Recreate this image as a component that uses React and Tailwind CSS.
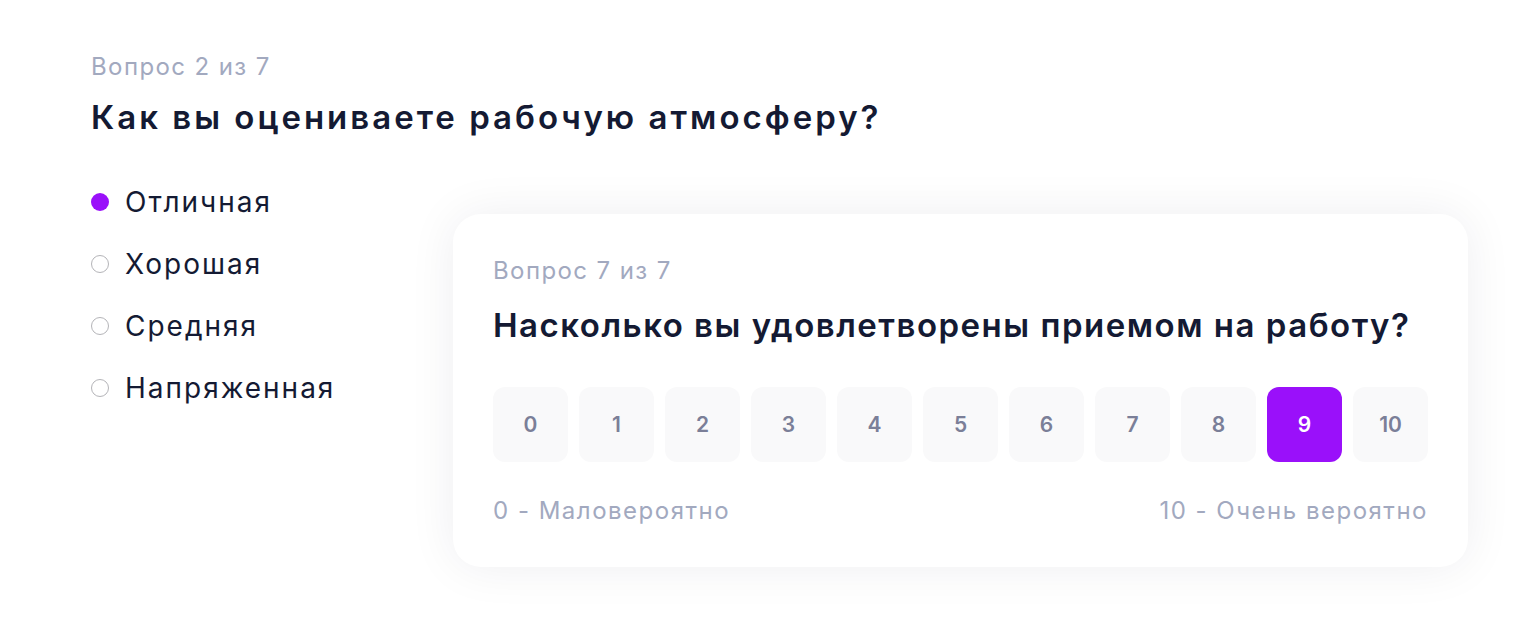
import React from "react";

const options = [
  { label: "Отличная", checked: true },
  { label: "Хорошая", checked: false },
  { label: "Средняя", checked: false },
  { label: "Напряженная", checked: false },
];

const scale = [0, 1, 2, 3, 4, 5, 6, 7, 8, 9, 10];

function Radio({ checked }) {
  return checked ? (
    <span className="block h-[18px] w-[18px] rounded-full bg-[#9a10fa]" />
  ) : (
    <span className="block h-[18px] w-[18px] rounded-full border-[1.5px] border-[#b4b4b8] bg-white" />
  );
}

export default function App() {
  return (
    <div
      className="min-h-[620px] w-full bg-white pl-[91px] pt-[52px] text-[#141a33]"
      style={{ fontFamily: "Inter, 'Noto Sans', sans-serif" }}
    >
      <p className="text-[24px] leading-[30px] tracking-[1.4px] text-[#a2a9bf]">Вопрос 2 из 7</p>
      <h1 className="mt-[15px] whitespace-nowrap text-[33px] font-semibold leading-[40px] tracking-[3px]">
        Как вы оцениваете рабочую атмосферу?
      </h1>

      <div className="mt-[48px] flex items-start">
        <ul className="flex w-[362px] flex-col gap-[28px]">
          {options.map((o) => (
            <li key={o.label} className="flex items-center gap-[16px]">
              <Radio checked={o.checked} />
              <span className="text-[28px] leading-[34px] tracking-[2px]">{o.label}</span>
            </li>
          ))}
        </ul>

        <div className="mt-[29px] w-[1015px] rounded-[28px] bg-white px-[40px] pb-[41px] pt-[42px] shadow-[0_0_48px_rgba(20,26,51,0.07)]">
          <p className="text-[24px] leading-[30px] tracking-[1.4px] text-[#a2a9bf]">Вопрос 7 из 7</p>
          <h2 className="mt-[19px] whitespace-nowrap text-[33px] font-semibold leading-[40px] tracking-[1.5px]">
            Насколько вы удовлетворены приемом на работу?
          </h2>
          <div className="mt-[42px] flex gap-[11px]">
            {scale.map((n) => (
              <button
                key={n}
                className={
                  n === 9
                    ? "flex h-[75px] w-[75px] items-center justify-center rounded-[12px] bg-[#9a10fa] text-[21px] font-semibold text-white"
                    : "flex h-[75px] w-[75px] items-center justify-center rounded-[12px] bg-[#f9f9fa] text-[21px] font-semibold text-[#7b7f98]"
                }
              >
                {n}
              </button>
            ))}
          </div>
          <div className="mt-[34px] flex justify-between text-[24px] leading-[30px] tracking-[1.5px] text-[#a2a9bf]">
            <span>0 - Маловероятно</span>
            <span>10 - Очень вероятно</span>
          </div>
        </div>
      </div>
    </div>
  );
}
